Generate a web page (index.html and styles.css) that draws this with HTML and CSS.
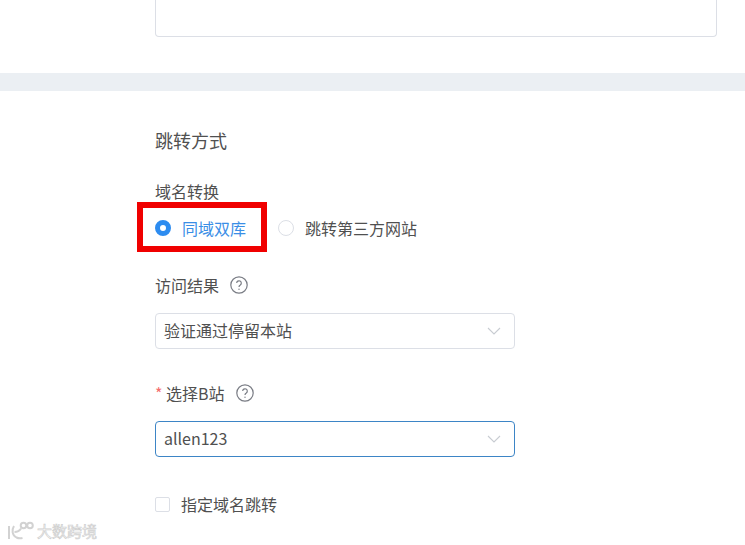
FILE: index.html
```html
<!DOCTYPE html>
<html lang="zh-CN">
<head>
    <meta charset="UTF-8">
    <title>跳转方式</title>
    <link rel="stylesheet" href="styles.css">
</head>
<body>
    <div class="top-section">
        <div class="textarea-box"></div>
    </div>
    <div class="band"></div>
    <div class="form-section">
        <h2 class="section-title">跳转方式</h2>

        <div class="field-label domain-label">域名转换</div>
        <div class="radio-group">
            <div class="radio-item radio-checked">
                <span class="radio-dot"></span>
                <span>同域双库</span>
            </div>
            <div class="radio-item">
                <span class="radio-dot"></span>
                <span>跳转第三方网站</span>
            </div>
            <div class="highlight-box"></div>
        </div>

        <div class="field-label result-label">
            <span>访问结果</span>
            <svg class="help-icon" viewBox="0 0 18 18"><circle cx="9" cy="9" r="8.2"/><path d="M6.7 7.1a2.3 2.3 0 1 1 3.6 1.9c-.8.5-1.3 1-1.3 2"/><circle class="help-point" cx="9" cy="13.2" r=".7"/></svg>
        </div>
        <div class="select-box">
            <span class="select-text">验证通过停留本站</span>
            <svg class="arrow" viewBox="0 0 14 8"><path d="M1 1l6 6 6-6"/></svg>
        </div>

        <div class="field-label site-label">
            <span><span class="required">*</span> 选择B站</span>
            <svg class="help-icon" viewBox="0 0 18 18"><circle cx="9" cy="9" r="8.2"/><path d="M6.7 7.1a2.3 2.3 0 1 1 3.6 1.9c-.8.5-1.3 1-1.3 2"/><circle class="help-point" cx="9" cy="13.2" r=".7"/></svg>
        </div>
        <div class="select-box select-focus">
            <span class="select-text">allen123</span>
            <svg class="arrow" viewBox="0 0 14 8"><path d="M1 1l6 6 6-6"/></svg>
        </div>

        <div class="check-row">
            <span class="checkbox"></span>
            <span>指定域名跳转</span>
        </div>
    </div>

    <div class="watermark">
        <svg class="watermark-logo" viewBox="0 0 28 20"><path d="M3 5v13M8 5c-2.500 4-2 9 2.500 11.500 2 1 4 1 6 .5M8.500 11c3 0 5-1 6.500-3.500"/><circle cx="17.500" cy="4.500" r="2.800"/><circle cx="24" cy="4.500" r="2.800"/></svg>
        <span>大数跨境</span>
    </div>
</body>
</html>
```

FILE: styles.css
```css
html, body {
    height: 100%;
}

body {
    margin: 0;
    height: 545px;
    overflow: hidden;
    position: relative;
    background-color: #fff;
    font-family: "Noto Sans CJK SC", "Noto Sans", sans-serif;
    font-size: 16px;
    color: #505050;
}

.top-section {
    height: 73px;
    padding: 0 28px 0 155px;
    box-sizing: border-box;
}

.textarea-box {
    height: 37px;
    box-sizing: border-box;
    border: 1px solid #dcdfe6;
    border-top: none;
    border-radius: 0 0 4px 4px;
}

.band {
    height: 18px;
    background-color: #ebeff3;
}

.form-section {
    padding: 37px 0 0 155px;
}

.section-title {
    margin: 0;
    font-size: 18px;
    line-height: 25px;
    font-weight: normal;
}

.field-label {
    display: flex;
    align-items: center;
    line-height: 22px;
    gap: 11px;
}

.domain-label {
    margin-top: 27px;
}

.radio-group {
    display: flex;
    align-items: center;
    position: relative;
    height: 22px;
    margin-top: 15px;
    gap: 32px;
}

.radio-item {
    display: flex;
    align-items: center;
    gap: 11px;
}

.radio-dot {
    width: 16px;
    height: 16px;
    box-sizing: border-box;
    border: 1px solid #dcdfe6;
    border-radius: 50%;
}

.radio-checked {
    color: #3a8ee6;
}

.radio-checked .radio-dot {
    border: 5px solid #2d8cf0;
}

.highlight-box {
    position: absolute;
    left: -18px;
    top: -15px;
    width: 130px;
    height: 50px;
    box-sizing: border-box;
    border: 6px solid #f00000;
}

.result-label {
    margin-top: 35px;
}

.site-label {
    margin-top: 33px;
}

.help-icon {
    width: 18px;
    height: 18px;
    fill: none;
    stroke: #7a7d85;
    stroke-width: 1.2;
}

.help-point {
    fill: #7a7d85;
    stroke: none;
}

.required {
    color: #f56c6c;
}

.select-box {
    display: flex;
    align-items: center;
    justify-content: space-between;
    width: 360px;
    height: 36px;
    box-sizing: border-box;
    margin-top: 17px;
    padding: 0 13px 0 8px;
    border: 1px solid #dcdfe6;
    border-radius: 4px;
}

.select-text {
    margin-top: -2px;
}

.select-focus {
    border-color: #3d85c6;
}

.arrow {
    width: 14px;
    height: 8px;
    fill: none;
    stroke: #c8ccd2;
    stroke-width: 1.1;
}

.check-row {
    display: flex;
    align-items: center;
    gap: 11px;
    margin-top: 36px;
    line-height: 22px;
}

.checkbox {
    width: 15px;
    height: 15px;
    box-sizing: border-box;
    border: 1px solid #dcdfe6;
    border-radius: 2px;
}

.watermark {
    position: absolute;
    left: 6px;
    top: 521px;
    display: flex;
    align-items: center;
    gap: 3px;
    font-size: 15px;
    line-height: 20px;
    color: #fff;
    -webkit-text-stroke: 0.7px #cfcfcf;
}

.watermark-logo {
    width: 28px;
    height: 20px;
    fill: none;
    stroke: #d2d2d2;
    stroke-width: 2;
}
```
